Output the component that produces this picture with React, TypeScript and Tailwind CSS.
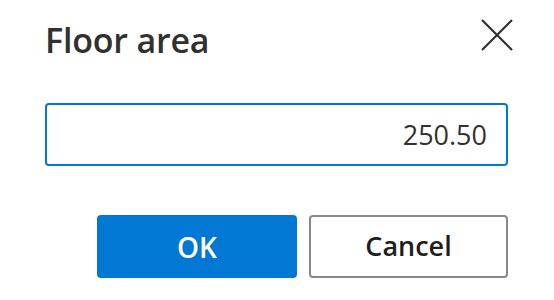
import React from 'react';

const App: React.FC = () => {
  return (
    <div className="w-[554px] h-[300px] bg-white pl-[45px] pr-[46px] pt-[16px] font-['Open_Sans',sans-serif] text-[#323130]">
      {/* Header */}
      <div className="flex items-start justify-between">
        <h1 className="text-[34px] leading-[48px] font-semibold tracking-[-0.2px]">Floor area</h1>
        <button className="mt-[3px] mr-[-5px] w-[32px] h-[32px]" aria-label="Close">
          <svg width="32" height="32" viewBox="0 0 32 32" fill="none">
            <path d="M1 1L31 31M31 1L1 31" stroke="#323130" strokeWidth="2.2" />
          </svg>
        </button>
      </div>

      {/* Value field */}
      <input
        readOnly
        value="250.50"
        className="mt-[39px] block w-full h-[63px] border-2 border-[#0078d4] rounded-[4px] pr-[19px] text-right text-[27px] text-[#323130] outline-none"
      />

      {/* Actions */}
      <div className="mt-[49px] flex justify-end gap-[12px]">
        <button className="w-[200px] h-[63px] rounded-[4px] bg-[#0078d4] text-white text-[28px] font-semibold">
          OK
        </button>
        <button className="w-[199px] h-[63px] rounded-[4px] border-2 border-[#8a8886] bg-white text-[#201f1e] text-[27px] font-semibold">
          Cancel
        </button>
      </div>
    </div>
  );
};

export default App;
